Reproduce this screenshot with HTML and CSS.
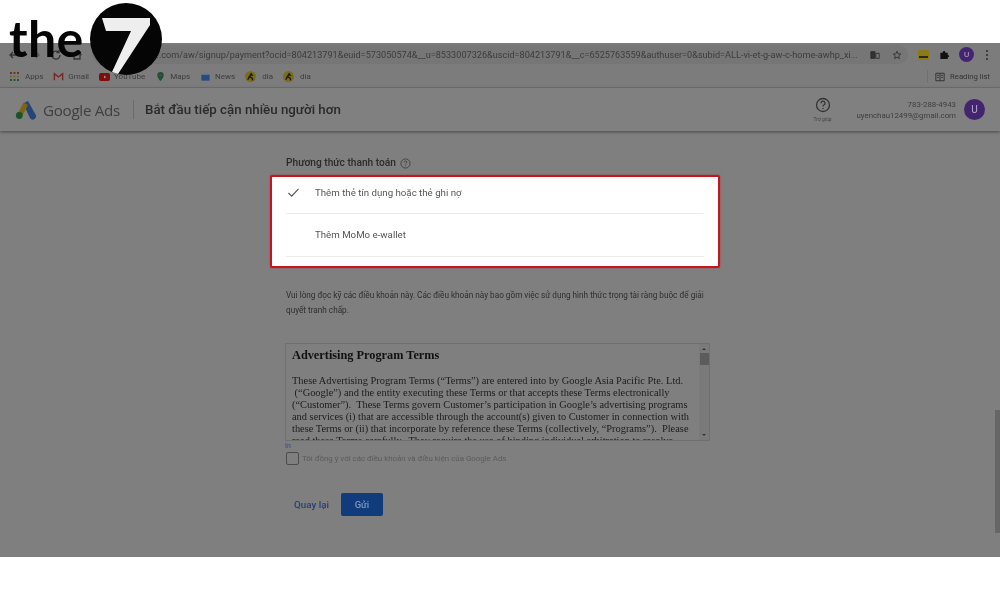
FILE: index.html
```html
<!DOCTYPE html>
<html lang="vi">
<head>
<meta charset="utf-8">
<title>Google Ads</title>
<link rel="stylesheet" href="styles.css">
</head>
<body>
<div class="page">
  <div class="logo">
    <span class="logo-the">the</span>
    <span class="logo-circle"><svg viewBox="0 0 72 72" width="72" height="72"><path class="logo-seven" d="M12 15H60V22L28 71L22 69L41 28H16Z"/></svg></span>
  </div>
  <div class="shot">
    <div class="toolbar">
      <div class="nav">
        <svg class="nav-i" viewBox="0 0 12 12"><path d="M10 6H2M5 3L2 6L5 9"/></svg>
        <svg class="nav-i dim" viewBox="0 0 12 12"><path d="M2 6H10M7 3L10 6L7 9"/></svg>
        <svg class="nav-i" viewBox="0 0 12 12"><path d="M10 6A4 4 0 1 1 8.8 3.2M9 1V3.6H6.4"/></svg>
        <svg class="nav-i" viewBox="0 0 12 12"><path d="M3 5.5V10H9V5.5M1.5 6L6 2L10.500 6"/></svg>
      </div>
      <div class="omnibox">
        <span class="url">ads.google.com/aw/signup/payment?ocid=804213791&amp;euid=573050574&amp;__u=8533007326&amp;uscid=804213791&amp;__c=6525763559&amp;authuser=0&amp;subid=ALL-vi-et-g-aw-c-home-awhp_xi...</span>
        <svg class="omni-i" viewBox="0 0 12 12"><path class="fill" d="M1 2H6V10H1Z"/><path d="M7 4H11V10H7Z"/></svg>
        <svg class="omni-i" viewBox="0 0 12 12"><path d="M6 1.500L7.300 4.600L10.600 4.800L8 7L8.900 10.300L6 8.500L3.100 10.300L4 7L1.400 4.800L4.700 4.600Z"/></svg>
      </div>
      <div class="ext"><span class="ext-bar"></span></div>
      <svg class="puzzle" viewBox="0 0 12 12"><path d="M1.500 4H4C4 1.500 7 1.500 7 4H9.500V6.500C11.500 6.500 11.500 9 9.500 9V11H1.500Z"/></svg>
      <span class="avatar-small">U</span>
      <span class="kebab"><i></i><i></i><i></i></span>
    </div>
    <div class="bookmarks">
      <span class="bm"><svg class="apps" viewBox="0 0 9 9"><path class="a1" d="M0 0H2V2H0ZM3.500 0H5.500V2H3.500ZM7 0H9V2H7Z"/><path class="a2" d="M0 3.500H2V5.500H0ZM3.500 3.500H5.500V5.500H3.500ZM7 3.500H9V5.500H7Z"/><path class="a3" d="M0 7H2V9H0ZM3.500 7H5.500V9H3.500ZM7 7H9V9H7Z"/></svg>Apps</span>
      <span class="bm"><svg class="bm-i" viewBox="0 0 12 12"><path class="gmail" d="M1.500 10V3L6 6.500L10.500 3V10"/></svg>Gmail</span>
      <span class="bm"><span class="yt"><svg class="yt-play" viewBox="0 0 4 4"><path d="M1 .5L3.500 2L1 3.500Z"/></svg></span>YouTube</span>
      <span class="bm"><svg class="bm-i" viewBox="0 0 12 12"><path class="maps" d="M6 1A3.500 3.500 0 0 1 9.500 4.500C9.500 7 6 11 6 11C6 11 2.500 7 2.500 4.500A3.500 3.500 0 0 1 6 1Z"/><circle class="maps-dot" cx="6" cy="4.500" r="1.300"/></svg>Maps</span>
      <span class="bm"><svg class="bm-i" viewBox="0 0 12 12"><path class="news" d="M1.500 4H10.500V10.500H1.500Z"/><path class="news-top" d="M3 2H9V4H3Z"/></svg>News</span>
      <span class="bm"><span class="dia"><svg class="dia-run" viewBox="0 0 10 10"><path d="M6 2L4 5L2.500 8M4 5L6.500 6.500L7 8.500M4.500 3.500L7.500 4"/></svg></span>dia</span>
      <span class="bm"><span class="dia"><svg class="dia-run" viewBox="0 0 10 10"><path d="M6 2L4 5L2.500 8M4 5L6.500 6.500L7 8.500M4.500 3.500L7.500 4"/></svg></span>dia</span>
      <span class="reading">
        <svg class="read-i" viewBox="0 0 12 12"><path d="M1 1.500H11V10.500H1ZM6 1.500V10.500M2.500 4H4.500M7.500 4H9.500M2.500 6.500H4.500M7.500 6.500H9.500"/></svg>
        Reading list
      </span>
    </div>
    <header class="ads-header">
      <svg class="ads-logo" viewBox="0 0 22 20"><path class="ads-blue" d="M8 3.500L13 1L20.500 14.500A3.200 3.200 0 0 1 15 18Z"/><path class="ads-yellow" d="M8.500 2.500L13 5L7 16.500L2 15Z"/><circle class="ads-green" cx="4.300" cy="15.500" r="3.400"/></svg>
      <span class="ads-name">Google Ads</span>
      <span class="ads-sep"></span>
      <span class="ads-title">Bắt đầu tiếp cận nhiều người hơn</span>
      <div class="help">
        <svg class="help-i" viewBox="0 0 16 16"><circle cx="8" cy="8" r="6.500"/><path d="M6 6.300A2 2 0 1 1 8.800 8C8.200 8.400 8 8.800 8 9.600M8 11V12"/></svg>
        <span class="help-label">Trợ giúp</span>
      </div>
      <div class="account">
        <span>783-288-4943</span>
        <span>uyenchau12499@gmail.com</span>
      </div>
      <span class="avatar">U</span>
    </header>
    <main class="main">
      <div class="section-title">Phương thức thanh toán
        <svg class="title-help" viewBox="0 0 12 12"><circle cx="6" cy="6" r="5"/><path d="M4.600 4.800A1.400 1.400 0 1 1 6.500 6C6.100 6.300 6 6.500 6 7M6 8V9"/></svg>
      </div>
      <div class="options">
        <div class="option">
          <svg class="check" viewBox="0 0 14 12"><path d="M1.500 6.500L5 10L12.500 2"/></svg>
          <span>Thêm thẻ tín dụng hoặc thẻ ghi nợ</span>
        </div>
        <div class="option">
          <span class="check"></span>
          <span>Thêm MoMo e-wallet</span>
        </div>
      </div>
      <p class="notice">Vui lòng đọc kỹ các điều khoản này. Các điều khoản này bao gồm việc sử dụng hình thức trọng tài ràng buộc để giải quyết tranh chấp.</p>
      <div class="terms">
        <div class="terms-text">
          <h2>Advertising Program Terms</h2>
          <p>These Advertising Program Terms (“Terms”) are entered into by Google Asia Pacific Pte. Ltd.<br>&nbsp;(“Google”) and the entity executing these Terms or that accepts these Terms electronically<br>(“Customer”).&nbsp; These Terms govern Customer’s participation in Google’s advertising programs<br>and services (i) that are accessible through the account(s) given to Customer in connection with<br>these Terms or (ii) that incorporate by reference these Terms (collectively, “Programs”).&nbsp; Please<br>read these Terms carefully.&nbsp; They require the use of binding individual arbitration to resolve</p>
        </div>
        <div class="scrollbar">
          <span class="arrow up"></span>
          <span class="thumb"></span>
          <span class="arrow down"></span>
        </div>
      </div>
      <a class="print">In</a>
      <label class="agree"><span class="box"></span>Tôi đồng ý với các điều khoản và điều kiện của Google Ads</label>
      <div class="actions">
        <a class="back">Quay lại</a>
        <button class="send">Gửi</button>
      </div>
    </main>
    <div class="page-scroll"></div>
  </div>
</div>
</body>
</html>
```

FILE: styles.css
```css
* { box-sizing: border-box; }
html, body { margin: 0; padding: 0; background: #fff; }
body { font-family: "Roboto", "Liberation Sans", sans-serif; color: #333; }
.page { position: relative; width: 1000px; height: 600px; overflow: hidden; padding-top: 43px; }

.logo { position: absolute; left: 9px; top: 3px; display: flex; align-items: flex-start; z-index: 2; filter: blur(.4px); }
.logo-the { width: 81px; font-family: "Lato", sans-serif; font-weight: 700; font-size: 50px; line-height: 1; letter-spacing: .4px; color: #050505; margin-top: 10px; }
.logo-circle { width: 72px; height: 72px; border-radius: 50%; background: #050505; display: block; }
.logo-circle svg { display: block; }
.logo-seven { fill: #eee; }

.shot { position: relative; height: 514px; background: #7f7f7f; display: flex; flex-direction: column; overflow: hidden; filter: blur(.45px); }

.toolbar { height: 23px; flex: none; display: flex; align-items: center; background: #7c7c7c; padding: 0 0 0 8px; }
.nav { display: flex; gap: 9px; width: 84px; flex: none; }
.nav-i { width: 12px; height: 12px; fill: none; stroke: #333; stroke-width: 1.3; }
.nav-i.dim { stroke: #5a5a5a; }
.omnibox { width: 816px; height: 19px; flex: none; border-radius: 10px; background: #767676; display: flex; align-items: center; padding: 0 6px 0 22px; color: #3c3c3c; font-size: 9.15px; }
.url { flex: 1; white-space: nowrap; min-width: 0; }
.omni-i { width: 10px; height: 10px; margin-left: 12px; flex: none; fill: none; stroke: #2b2b2b; stroke-width: 1; }
.omni-i .fill { fill: #333; }
.ext { width: 11px; height: 10px; flex: none; margin-left: 10px; background: #8a7a18; position: relative; border-radius: 1px; }
.ext-bar { display: block; position: absolute; left: 1px; right: 1px; top: 6px; height: 2px; background: #2a2a1a; }
.puzzle { width: 11px; height: 11px; flex: none; margin-left: 10px; fill: #111; }
.avatar-small { width: 15px; height: 15px; flex: none; margin-left: 9px; border-radius: 50%; background: #42246f; color: #b9aed0; font-size: 8px; display: flex; align-items: center; justify-content: center; }
.kebab { display: flex; flex-direction: column; gap: 2px; margin-left: 12px; flex: none; }
.kebab i { display: block; width: 2px; height: 2px; background: #2b2b2b; border-radius: 50%; }

.bookmarks { height: 22px; flex: none; display: flex; align-items: center; gap: 10px; padding: 0 10px 0 10px; background: #7c7c7c; font-size: 8px; color: #3d3d3d; border-bottom: 1px solid #727272; }
.bm { display: flex; align-items: center; gap: 4px; }
.bm-i { width: 11px; height: 11px; flex: none; }
.apps { width: 9px; height: 9px; flex: none; margin-right: 2px; }
.a1 { fill: #6e3028; }
.a2 { fill: #766820; }
.a3 { fill: #2c5236; }
.gmail { fill: none; stroke: #7a241c; stroke-width: 1.500; }
.yt { width: 11px; height: 8px; background: #7e0d0d; border-radius: 2px; display: flex; align-items: center; justify-content: center; }
.yt-play { width: 4px; height: 4px; fill: #8f8f8f; }
.maps { fill: #24502e; }
.maps-dot { fill: #2f4f80; }
.news { fill: #274a80; }
.news-top { fill: #5f7aa0; }
.dia { width: 11px; height: 11px; border-radius: 50%; background: #7a6e18; flex: none; margin-right: 2px; display: flex; }
.dia-run { width: 11px; height: 11px; fill: none; stroke: #1a1a1a; stroke-width: 1.300; }
.reading { margin-left: auto; display: flex; align-items: center; gap: 5px; padding-left: 7px; border-left: 1px solid #6f6f6f; height: 13px; color: #333; font-size: 7.700px; }
.read-i { width: 10px; height: 10px; fill: none; stroke: #262626; stroke-width: 1; }

.ads-header { height: 43px; flex: none; display: flex; align-items: center; padding: 0 15px 0 15px; background: #808080; box-shadow: 0 1px 3px rgba(0,0,0,.45); position: relative; }
.ads-logo { width: 22px; height: 20px; flex: none; }
.ads-blue { fill: #254578; }
.ads-yellow { fill: #7c6610; }
.ads-green { fill: #1a5229; }
.ads-name { font-size: 15.2px; color: #3f3f3f; margin-left: 6px; font-family: "Open Sans", sans-serif; letter-spacing: -.3px; white-space: nowrap; }
.ads-sep { width: 1px; height: 19px; background: #6c6c6c; margin-left: 13px; }
.ads-title { font-size: 13.3px; font-weight: 500; color: #2a2a2a; margin-left: 11px; white-space: nowrap; }
.help { margin-left: auto; display: flex; flex-direction: column; align-items: center; width: 24px; }
.help-i { width: 16px; height: 16px; fill: none; stroke: #333; stroke-width: 1.300; }
.help-label { font-size: 5px; color: #444; margin-top: 3px; white-space: nowrap; }
.account { display: flex; flex-direction: column; align-items: flex-end; margin-left: 22px; font-size: 7.850px; line-height: 11px; color: #3d3d3d; }
.avatar { width: 21px; height: 21px; margin-left: 8px; border-radius: 50%; background: #42246f; color: #b9aed0; font-size: 10px; display: flex; align-items: center; justify-content: center; flex: none; }

.main { width: 450px; margin-left: 270px; padding-top: 25px; display: flex; flex-direction: column; }
.section-title { font-size: 10.2px; font-weight: 500; color: #2b2b2b; line-height: 14px; padding-left: 16px; display: flex; align-items: center; gap: 4px; }
.title-help { width: 11px; height: 11px; fill: none; stroke: #333; stroke-width: .8; }
.options { margin-top: 5px; height: 93px; background: #fff; border: 2px solid #c8141c; border-radius: 2px; box-shadow: 0 0 2px rgba(200,20,30,.6); padding: 0 14px; }
.option { display: flex; align-items: center; gap: 15px; border-bottom: 1px solid #ececec; font-size: 9.700px; color: #555; }
.option:first-child { height: 37px; padding-bottom: 6px; }
.option:last-child { height: 43px; padding-bottom: 2px; }
.check { width: 13px; height: 11px; flex: none; fill: none; stroke: #555; stroke-width: 1.300; margin-left: 1px; }
.notice { margin: 20px 0 0; padding: 0 12px 0 16px; font-size: 8.200px; line-height: 15px; color: #2e2e2e; }
.terms { margin: 25px 10px 0 15px; height: 98px; border: 1px solid #6f6f6f; display: flex; overflow: hidden; }
.terms-text { flex: 1; min-width: 0; overflow: hidden; padding: 4px 0 0 6px; font-family: "Liberation Serif", serif; color: #1c1c1c; white-space: nowrap; }
.terms-text h2 { margin: 0; font-size: 12.300px; line-height: 14px; font-weight: 700; color: #111; }
.terms-text p { margin: 13px 0 0; font-size: 10.400px; line-height: 12.100px; }
.scrollbar { width: 10px; flex: none; display: flex; flex-direction: column; align-items: center; background: #7a7a7a; }
.arrow { width: 0; height: 0; border-left: 2px solid transparent; border-right: 2px solid transparent; margin-top: 4px; }
.arrow.up { border-bottom: 2px solid #333; }
.arrow.down { border-top: 2px solid #333; margin-top: auto; margin-bottom: 4px; }
.thumb { width: 9px; height: 12px; margin-top: 3px; background: #5c5c5c; }
.print { font-size: 7px; line-height: 10px; color: #2f4a80; padding-left: 15px; }
.agree { display: flex; align-items: center; margin-left: 16px; height: 14px; font-size: 7.900px; color: #5b5b5b; gap: 3px; white-space: nowrap; }
.box { width: 13px; height: 13px; border: 1.500px solid #4c4c4c; border-radius: 2px; flex: none; }
.actions { display: flex; align-items: center; margin: 28px 0 0 24px; gap: 12px; }
.back { font-size: 9.800px; font-weight: 500; color: #23407a; }
.send { width: 42px; height: 23px; padding: 0; border: 0; border-radius: 2px; background: #103c7c; color: #7f98c0; font: 500 9.400px "Roboto", sans-serif; }

.page-scroll { position: absolute; right: 0; top: 367px; width: 5px; height: 123px; background: #666; }
```
